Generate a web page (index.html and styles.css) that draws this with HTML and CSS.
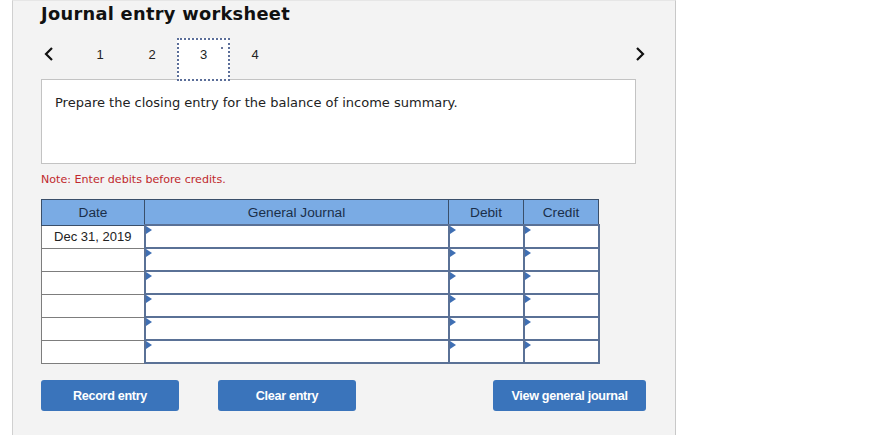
FILE: index.html
```html
<!DOCTYPE html>
<html lang="en">
<head>
  <meta charset="utf-8" />
  <title>Journal entry worksheet</title>
  <link rel="stylesheet" href="styles.css">
</head>
<body>
  <div class="panel">
    <h1>Journal entry worksheet</h1>

    <div class="nav">
      <button class="arrow prev" aria-label="Previous">
        <svg width="10" height="14" viewBox="0 0 10 14"><polyline points="8,1 2,7 8,13" fill="none" stroke="#111" stroke-width="2.2"/></svg>
      </button>
      <div class="tab">1</div>
      <div class="tab">2</div>
      <div class="tab current">3<span class="dot"></span></div>
      <div class="tab">4</div>
      <button class="arrow next" aria-label="Next">
        <svg width="10" height="14" viewBox="0 0 10 14"><polyline points="2,1 8,7 2,13" fill="none" stroke="#111" stroke-width="2.2"/></svg>
      </button>
    </div>

    <div class="prompt">Prepare the closing entry for the balance of income summary.</div>

    <div class="note">Note: Enter debits before credits.</div>

    <table class="journal">
      <thead>
        <tr>
          <th class="c-date">Date</th>
          <th class="c-gj">General Journal</th>
          <th class="c-amt">Debit</th>
          <th class="c-amt">Credit</th>
        </tr>
      </thead>
      <tbody>
        <tr><td class="date">Dec 31, 2019</td><td class="inp"></td><td class="inp"></td><td class="inp"></td></tr>
        <tr><td class="date"></td><td class="inp"></td><td class="inp"></td><td class="inp"></td></tr>
        <tr><td class="date"></td><td class="inp"></td><td class="inp"></td><td class="inp"></td></tr>
        <tr><td class="date"></td><td class="inp"></td><td class="inp"></td><td class="inp"></td></tr>
        <tr><td class="date"></td><td class="inp"></td><td class="inp"></td><td class="inp"></td></tr>
        <tr><td class="date"></td><td class="inp"></td><td class="inp"></td><td class="inp"></td></tr>
      </tbody>
    </table>

    <div class="actions">
      <button class="btn record">Record entry</button>
      <button class="btn clear">Clear entry</button>
      <button class="btn view">View general journal</button>
    </div>
  </div>
</body>
</html>
```

FILE: styles.css
```css
html, body{ margin:0; padding:0; background:#fff; }
body{ font-family: "DejaVu Sans", Verdana, sans-serif; color:#222; }

.panel{
  margin-left:12px; width:664px; height:435px; box-sizing:border-box;
  background:#f3f3f3;
  border-left:1px solid #d0d0d0; border-right:1px solid #c8c8c8; border-top:1px solid #e6e6e6;
  padding:0 28px;
}
h1{ margin:0; padding-top:3px; font-size:17.8px; line-height:20px; font-weight:bold; color:#111; letter-spacing:0.3px; }

.nav{ display:flex; align-items:flex-start; height:41px; margin-top:14px; }
.arrow{ background:none; border:0; padding:0; cursor:pointer; display:flex; align-items:center; margin-top:9px; }
.arrow.prev{ width:33px; padding-left:3px; }
.arrow.next{ margin-left:auto; margin-right:2px; }
.tab{
  width:52px; height:41px; display:flex; justify-content:center; padding-top:9px;
  font-family:"Liberation Sans", Arial, sans-serif; font-size:13px; color:#222;
  box-sizing:border-box;
}
.tab.current{
  position:relative; z-index:1; height:43px; margin:0 -1px -2px -1px; width:53px; padding-top:7px;
  background:#fff; border:2px dotted #5b6e99;
}
.tab .dot{ position:absolute; top:7px; right:5px; width:2px; height:2px; background:#3a4a7a; border-radius:1px; }

.prompt{
  width:595px; height:85px; box-sizing:border-box;
  background:#fff; border:1px solid #c3c3c3;
  padding:15px 13px; font-size:13px; color:#222;
}
.note{ margin-top:9px; font-size:11.1px; color:#c0282d; }

.journal{ margin-top:13px; border-collapse:collapse; font-family:"Liberation Sans", Arial, sans-serif; font-size:13px; }
.journal th{
  background:#7aabe4; color:#1a2f4a; font-weight:normal; font-size:13.7px; height:24px; padding:0;
  border:1px solid #3a4f6a;
}
.c-date{ width:102px; }
.c-gj{ width:303px; }
.c-amt{ width:74px; }
.journal td{ height:21px; padding:0; background:#fff; }
.journal td.date{ border:1px solid #7d7d7d; text-align:center; color:#222; }
.journal td.inp{ border:2px solid #5a7196; position:relative; }
.journal td.inp::before{
  content:""; position:absolute; top:0; left:0;
  border-left:6px solid #3f6fb3; border-top:4px solid transparent; border-bottom:4px solid transparent;
}

.actions{ display:flex; margin-top:16px; }
.btn{
  height:31px; border:0; border-radius:3px; background:#3a74bb; color:#fff;
  font-family:"Liberation Sans", Arial, sans-serif; font-weight:bold; font-size:12.6px; letter-spacing:-0.3px;
  cursor:pointer; padding:0;
}
.btn.record{ width:138px; }
.btn.clear{ width:138px; margin-left:39px; }
.btn.view{ width:153px; margin-left:137px; }
```
